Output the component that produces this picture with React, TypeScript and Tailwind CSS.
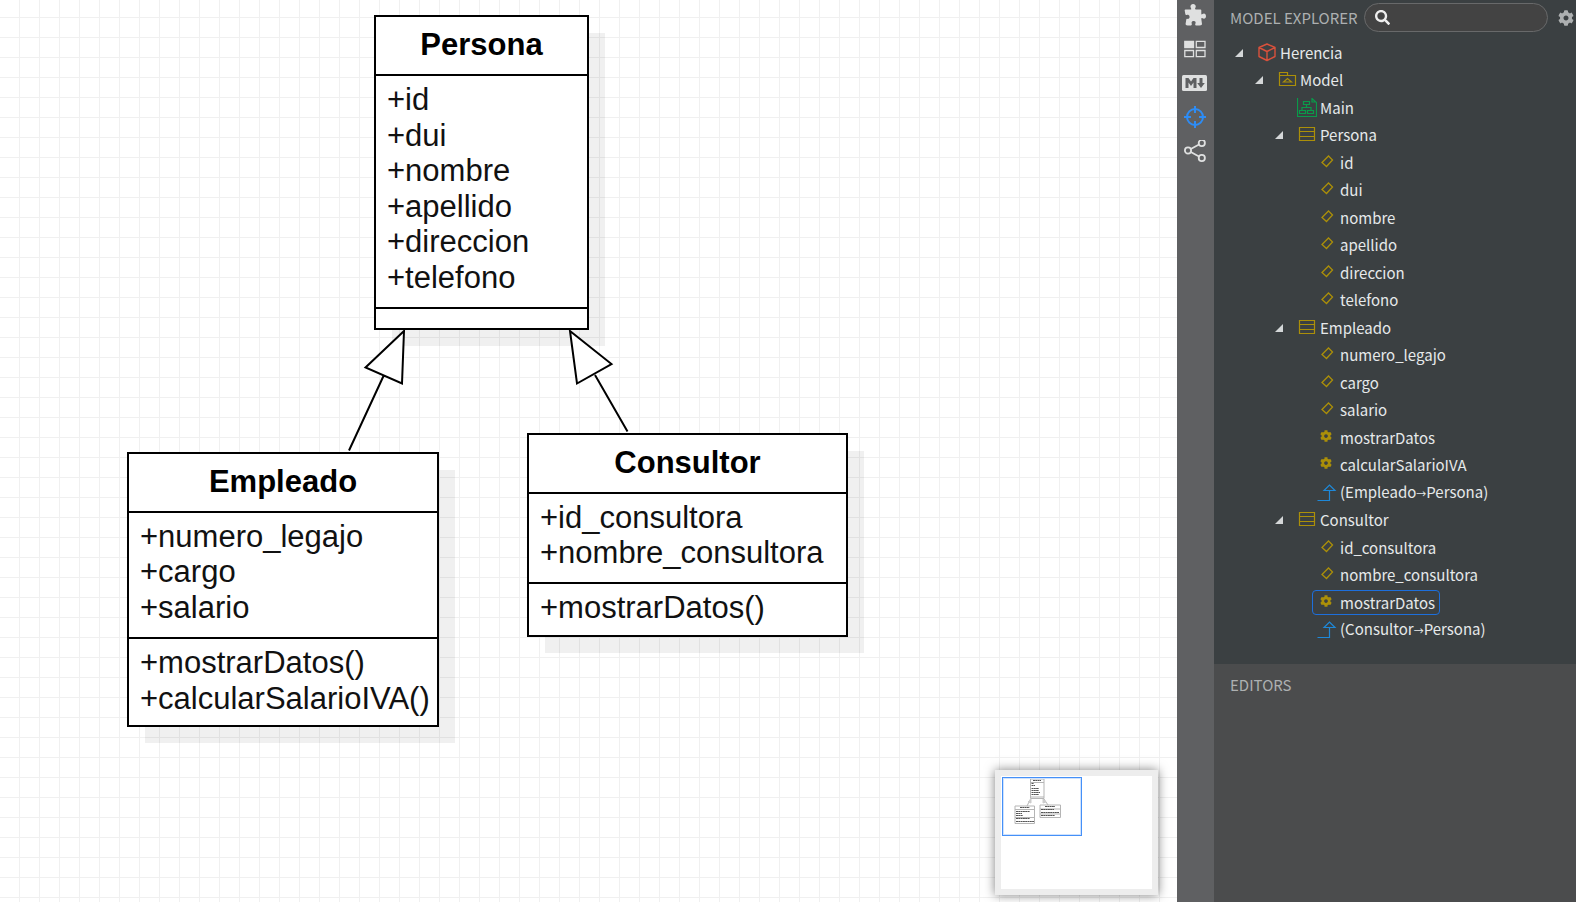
import React, { useState } from "react";
import { FaCog, FaSearch } from "react-icons/fa";

type NodeKind = "project" | "model" | "diagram" | "class" | "attribute" | "operation" | "generalization";

interface TreeNode {
  id: string;
  label: React.ReactNode;
  kind: NodeKind;
  depth: number;
  expandable?: boolean;
}

function Relation({ from, to }: { from: string; to: string }) {
  return (
    <span>
      ({from}
      <span className="text-[10px]">→</span>
      {to})
    </span>
  );
}

const tree: TreeNode[] = [
  { id: "herencia", label: "Herencia", kind: "project", depth: 0, expandable: true },
  { id: "model", label: "Model", kind: "model", depth: 1, expandable: true },
  { id: "main", label: "Main", kind: "diagram", depth: 2 },
  { id: "persona", label: "Persona", kind: "class", depth: 2, expandable: true },
  { id: "p-id", label: "id", kind: "attribute", depth: 3 },
  { id: "p-dui", label: "dui", kind: "attribute", depth: 3 },
  { id: "p-nombre", label: "nombre", kind: "attribute", depth: 3 },
  { id: "p-apellido", label: "apellido", kind: "attribute", depth: 3 },
  { id: "p-direccion", label: "direccion", kind: "attribute", depth: 3 },
  { id: "p-telefono", label: "telefono", kind: "attribute", depth: 3 },
  { id: "empleado", label: "Empleado", kind: "class", depth: 2, expandable: true },
  { id: "e-legajo", label: "numero_legajo", kind: "attribute", depth: 3 },
  { id: "e-cargo", label: "cargo", kind: "attribute", depth: 3 },
  { id: "e-salario", label: "salario", kind: "attribute", depth: 3 },
  { id: "e-mostrar", label: "mostrarDatos", kind: "operation", depth: 3 },
  { id: "e-calcular", label: "calcularSalarioIVA", kind: "operation", depth: 3 },
  { id: "e-gen", label: <Relation from="Empleado" to="Persona" />, kind: "generalization", depth: 3 },
  { id: "consultor", label: "Consultor", kind: "class", depth: 2, expandable: true },
  { id: "c-id", label: "id_consultora", kind: "attribute", depth: 3 },
  { id: "c-nombre", label: "nombre_consultora", kind: "attribute", depth: 3 },
  { id: "c-mostrar", label: "mostrarDatos", kind: "operation", depth: 3 },
  { id: "c-gen", label: <Relation from="Consultor" to="Persona" />, kind: "generalization", depth: 3 },
];

const indents = ["pl-[17px]", "pl-[37px]", "pl-[57px]", "pl-[77px]"];

function KindIcon({ kind }: { kind: NodeKind }) {
  switch (kind) {
    case "project":
      return (
        <svg viewBox="0 0 20 20" className="size-5 shrink-0" fill="none" stroke="#d9513c" strokeWidth="1.4" strokeLinejoin="round">
          <path d="M10 1 18 4.5V13.5L10 17.5 2 13.5V4.5ZM2 4.5 10 8.5 18 4.5M10 8.5V17.5" />
        </svg>
      );
    case "model":
      return (
        <svg viewBox="0 0 20 20" className="size-5 shrink-0" fill="none" stroke="#ab8f09" strokeWidth="1.2">
          <path d="M2.500 2.500H10.500V5.500H18.500V15.500H2.500ZM2.500 5.500H10.500M6.500 12 10.500 8.500 14.500 12Z" />
        </svg>
      );
    case "diagram":
      return (
        <svg viewBox="0 0 20 20" className="size-5 shrink-0" fill="none" stroke="#0a9a4a" strokeWidth="1.2">
          <path d="M.5 0V18.500H19.500V4.500L15 .5V4H19M6.500 3.500H12.500V6.500H6.500ZM9.500 6.500V9.500M5 12V9.500H14V12M2.500 12.500H8.500V15.500H2.500ZM10.500 12.500H16.500V15.500H10.500Z" />
        </svg>
      );
    case "class":
      return (
        <svg viewBox="0 0 20 20" className="size-5 shrink-0" fill="none" stroke="#ab8f09" strokeWidth="1.2">
          <path d="M2.500 2.500H17.500V15.500H2.500ZM2.500 6.500H17.500M2.500 11.500H17.500" />
        </svg>
      );
    case "attribute":
      return (
        <svg viewBox="0 0 20 20" className="size-5 shrink-0" fill="none" stroke="#ab8f09" strokeWidth="1.300">
          <path d="M5 9.500 11.500 3 15.500 7 9.500 13.500Z" />
        </svg>
      );
    case "operation":
      return (
        <span className="flex size-5 shrink-0 items-start justify-start pt-[2px] pl-[3px]">
          <FaCog className="size-3 text-[#ab8f09]" />
        </span>
      );
    case "generalization":
      return (
        <svg viewBox="0 0 20 20" className="size-5 shrink-0" fill="none" stroke="#1e88d8" strokeWidth="1.2">
          <path d="M.5 17.500H12.500V7.500M7 7.500 12.500 2 18 7.500Z" />
        </svg>
      );
  }
}

function TreeRow({ node, selected, onSelect }: { node: TreeNode; selected: boolean; onSelect: () => void }) {
  return (
    <li className={`flex items-center ${indents[node.depth]}`}>
      <span className="flex w-[21px] shrink-0 justify-start pl-1">
        {node.expandable && (
          <svg viewBox="0 0 8 8" className="size-2" fill="#d4d7d8">
            <path d="M8 0V8H0Z" />
          </svg>
        )}
      </span>
      <button
        type="button"
        onClick={onSelect}
        className={`flex h-[25px] items-center gap-[3px] rounded border px-1 text-[15px] leading-6 whitespace-nowrap text-[#e6e9ea] ${
          selected ? "border-[#1d6fdc]" : "border-transparent"
        }`}
      >
        <KindIcon kind={node.kind} />
        {node.label}
      </button>
    </li>
  );
}

function ClassNode({
  name,
  place,
  attributes,
  attributesHeight,
  operations,
  operationsHeight,
}: {
  name: string;
  place: string;
  attributes: string[];
  attributesHeight: string;
  operations: string[];
  operationsHeight: string;
}) {
  return (
    <section
      className={`absolute flex flex-col border-2 border-black bg-white text-[31px] leading-[35px] text-[#111] shadow-[17px_17px_0_-1px_rgba(0,0,0,0.06)] ${place}`}
    >
      <h2 className="pt-[10px] pb-3 text-center font-bold text-black">{name}</h2>
      <ul className={`grid auto-rows-fr border-t-2 border-black px-[11px] pt-[6px] pb-3 ${attributesHeight}`}>
        {attributes.map((a) => (
          <li key={a}>+{a}</li>
        ))}
      </ul>
      <ul className={`grid auto-rows-fr border-t-2 border-black px-[11px] ${operations.length ? "pt-[6px] pb-[9px]" : ""} ${operationsHeight}`}>
        {operations.map((o) => (
          <li key={o}>+{o}()</li>
        ))}
      </ul>
    </section>
  );
}

function Minimap() {
  return (
    <div className="absolute right-[19px] bottom-[7px] h-[125px] w-[163px] border-6 border-[#ededed] bg-white p-px shadow-[0_0_10px_rgba(0,0,0,0.5)]">
      <div className="h-[59px] w-20 border border-[#4590f8] outline-1 -outline-offset-2 outline-[#cfe2fd]">
        <svg viewBox="0 0 78 57" className="h-full w-full" fill="none">
          <g stroke="#b5b5b5" fill="#fff">
            <path d="M27.500 21 24 28M41 21 45 27" strokeWidth="1" />
            <path d="M25 24 28 21V25ZM40 21 43 24 40 25Z" fill="#ccc" stroke="#ccc" />
            <path d="M27.500 1H41V20.500H27.500ZM27.500 4.500H41M27.500 19H41" />
            <path d="M12 28H31.500V45.500H12ZM12 31.500H31.500M12 39.500H31.500" />
            <path d="M37 27H57.500V39.500H37ZM37 31H57.500M37 36H57.500" />
          </g>
          <g stroke="#555" strokeWidth="1" strokeDasharray="2 .3">
            <path d="M30 2.500H38M28.500 5.500H31M28.500 7.500H32M28.500 10.500H36M28.500 12.500H36M28.500 14.500H37M28.500 16.500H36" />
            <path d="M17 29.500H26.500M13 33.500H27M13 35.500H19M13 37.500H20M13 40.500H27M13 43.500H31" />
            <path d="M42 28.500H52M38 31.500H51M38 34.500H56M38 37.500H52" />
          </g>
        </svg>
      </div>
    </div>
  );
}

function DiagramCanvas() {
  return (
    <main className="relative min-w-0 flex-1 overflow-hidden bg-white bg-[linear-gradient(to_right,#f0f0f0_1px,transparent_1px),linear-gradient(to_bottom,#f0f0f0_1px,transparent_1px)] bg-size-[20px_20px] bg-position-[-1px_-3px] font-['Liberation_Sans',Arial,sans-serif]">
      <ClassNode
        name="Persona"
        place="left-[374px] top-[15px] w-[215px]"
        attributes={["id", "dui", "nombre", "apellido", "direccion", "telefono"]}
        attributesHeight="h-[233px]"
        operations={[]}
        operationsHeight="h-[21px]"
      />
      <ClassNode
        name="Empleado"
        place="left-[127px] top-[452px] w-[312px]"
        attributes={["numero_legajo", "cargo", "salario"]}
        attributesHeight="h-[126px]"
        operations={["mostrarDatos", "calcularSalarioIVA"]}
        operationsHeight="h-[88px]"
      />
      <ClassNode
        name="Consultor"
        place="left-[527px] top-[433px] w-[321px]"
        attributes={["id_consultora", "nombre_consultora"]}
        attributesHeight="h-[90px]"
        operations={["mostrarDatos"]}
        operationsHeight="h-[53px]"
      />
      <svg className="pointer-events-none absolute inset-0 h-full w-full" fill="#fff" stroke="#000" strokeWidth="2">
        <path d="M349 450.500 383.500 376M404 331 365.500 367.500 402 383.500ZM627.500 431.500 595 375M570 331 611.500 364 577 383.500Z" />
      </svg>
      <Minimap />
    </main>
  );
}

function Toolbar() {
  const button = "flex h-[22px] w-full items-center justify-center pr-[2px] text-[#dfe0e0]";
  return (
    <nav aria-label="Panels" className="flex w-[37px] shrink-0 flex-col gap-3 bg-[#5f6062] pt-1">
      <button type="button" aria-label="Extensions" className={button}>
        <svg viewBox="0 0 22 22" className="size-[22px]" fill="currentColor">
          <path d="M1.500 5.500H6.500C7.300 5.500 7.500 5 7 4.200 6.300 3 6.200 2 7 1 8 -.2 10.200 -.2 11.200 1 12 2 11.900 3 11.200 4.200 10.800 5 11.100 5.500 12 5.500H16.500C17 5.500 17.300 5.800 17.300 6.300V9.500C17.300 10.500 17.800 10.600 18.500 10.100 19.500 9.400 20.700 9.400 21.400 10.300 22.200 11.400 22.200 13 21.400 14 20.600 14.900 19.400 14.800 18.500 14.200 17.700 13.700 17.200 14.200 17.300 15L18 20C18 20.600 17.700 21 17 21.200 15.500 21.600 13.500 21.700 12.200 21.500 11.200 21.300 10.900 20.600 11.400 19.600 12 18.500 11.500 17.200 10 17.100 8.300 17 7.200 18 7.700 19.500 8.100 20.700 7.600 21.400 6.500 21.500 5 21.700 3.500 21.600 2.500 21.200 1.800 20.900 1.500 20.500 1.600 19.800L2.300 15.500C2.400 14.500 3 14.800 3.800 14.900 5.200 14.900 5.800 13.700 5.500 12.400 5.200 11.100 4 10.600 2.800 11 1.900 11.300 1.500 11 1.300 10L.7 6.500C.6 5.800.8 5.500 1.500 5.500Z" />
        </svg>
      </button>
      <button type="button" aria-label="Layout" className={button}>
        <svg viewBox="0 0 22 18" className="h-[18px] w-[22px]" fill="none" stroke="currentColor" strokeWidth="1.300">
          <path d="M.8 1.300H9.500V7.500H.8Z" fill="currentColor" />
          <path d="M12.300 1.300H21V7.500H12.300ZM.8 10.500H9.500V16.700H.8ZM12.300 10.500H21V16.700H12.300Z" />
        </svg>
      </button>
      <button type="button" aria-label="Markdown" className={button}>
        <svg viewBox="0 0 25 16" className="h-4 w-[25px]">
          <rect width="25" height="16" rx="1.500" fill="currentColor" />
          <path d="M3.500 13V3H6.500L9 6.500 11.500 3H14.500V13H11.500V7.500L9 11 6.500 7.500V13ZM17.500 3H20.500V8H22.800L19 13 15.200 8H17.500Z" fill="#5f6062" />
        </svg>
      </button>
      <button type="button" aria-label="Navigator" className={button}>
        <svg viewBox="0 0 22 22" className="size-[22px]" fill="none" stroke="#2d8cf5" strokeWidth="2">
          <circle cx="11" cy="11" r="8" />
          <path d="M11 0V7M11 15V22M0 11H7M15 11H22" />
        </svg>
      </button>
      <button type="button" aria-label="Relationships" className={button}>
        <svg viewBox="0 1 22 23" className="h-[23px] w-[22px]" fill="none" stroke="currentColor" strokeWidth="1.800">
          <circle cx="4" cy="11.500" r="3.100" />
          <circle cx="17.800" cy="4" r="3.100" />
          <circle cx="17.800" cy="19" r="3.100" />
          <path d="M6.800 10 15 5.500M6.800 13 15 17.500" />
        </svg>
      </button>
    </nav>
  );
}

export default function App() {
  const [selected, setSelected] = useState("c-mostrar");
  return (
    <div className="flex min-h-screen w-full overflow-hidden font-['Noto_Sans_CJK_SC','Noto_Sans',sans-serif]">
      <DiagramCanvas />
      <Toolbar />
      <aside className="flex w-[362px] shrink-0 flex-col bg-[#4b4c4d] text-[#adb0b1]">
        <section className="h-[664px] bg-[#3b4042]">
          <header className="flex h-[35px] items-center pl-4">
            <h1 className="w-[134px] text-[15px] leading-6 whitespace-nowrap">MODEL EXPLORER</h1>
            <label className="flex h-[29px] w-[184px] items-center rounded-full border border-[#68696a] bg-[#434343] pl-[10px]">
              <FaSearch className="size-[15px] shrink-0 text-[#eee]" />
              <input type="search" aria-label="Search model" className="w-full min-w-0 bg-transparent px-2 text-white outline-none" />
            </label>
            <button type="button" aria-label="Explorer settings" className="ml-[10px] shrink-0">
              <FaCog className="size-4 text-[#adb0b1]" />
            </button>
          </header>
          <ul className="mt-1 grid h-[605px] auto-rows-fr">
            {tree.map((node) => (
              <TreeRow key={node.id} node={node} selected={node.id === selected} onSelect={() => setSelected(node.id)} />
            ))}
          </ul>
        </section>
        <section className="px-4 pt-[9px]">
          <h2 className="text-[15px] leading-6">EDITORS</h2>
        </section>
      </aside>
    </div>
  );
}
